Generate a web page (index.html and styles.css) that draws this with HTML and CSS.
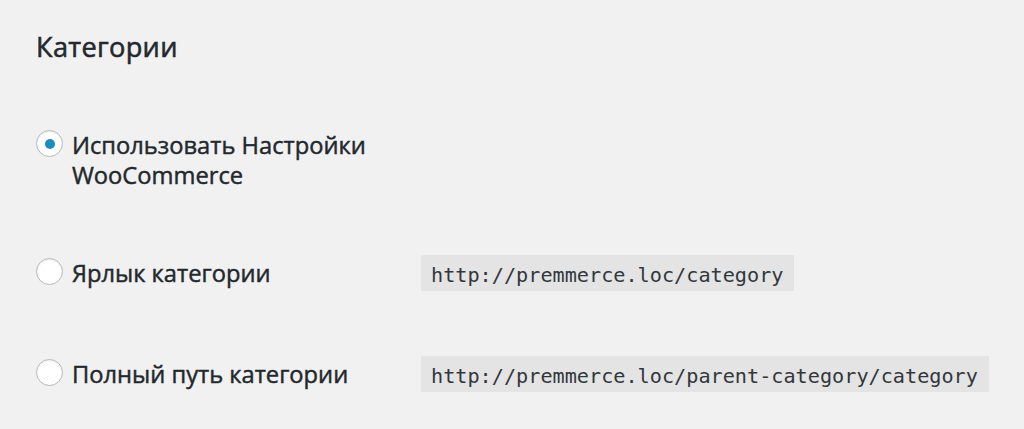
FILE: index.html
```html
<!DOCTYPE html>
<html lang="ru">
<head>
<meta charset="utf-8">
<title>Категории</title>
<link rel="stylesheet" href="styles.css">
</head>
<body>
<main class="page">
  <h2 class="title">Категории</h2>
  <div class="options">
    <div class="row">
      <label class="choice"><input type="radio" name="cat" class="radio" checked><span class="text">Использовать Настройки WooCommerce</span></label>
      <div class="value"></div>
    </div>
    <div class="row row-center">
      <label class="choice"><input type="radio" name="cat" class="radio"><span class="text">Ярлык категории</span></label>
      <div class="value"><code class="code">http://premmerce.loc/category</code></div>
    </div>
    <div class="row row-center">
      <label class="choice"><input type="radio" name="cat" class="radio"><span class="text">Полный путь категории</span></label>
      <div class="value"><code class="code">http://premmerce.loc/parent-category/category</code></div>
    </div>
  </div>
</main>
</body>
</html>
```

FILE: styles.css
```css
html, body {
  margin: 0;
  padding: 0;
  background: #f1f1f1;
}

body {
  font-family: "Open Sans", "Noto Sans", sans-serif;
  color: #23282d;
}

.page {
  padding: 32px 0 0 36px;
  display: flex;
  flex-direction: column;
  gap: 68px;
}

.title {
  margin: 0;
  font-size: 27.2px;
  line-height: 30px;
  font-weight: 400;
  -webkit-text-stroke: 0.55px #23282d;
  letter-spacing: 0.3px;
}

.options {
  display: flex;
  flex-direction: column;
  gap: 65px;
}

.row {
  display: grid;
  grid-template-columns: 385px auto;
  align-items: start;
}

.row-center {
  align-items: center;
}

.choice {
  display: flex;
  align-items: flex-start;
  gap: 9px;
  font-size: 23.7px;
  font-weight: 400;
  line-height: 30px;
  padding-right: 30px;
  -webkit-text-stroke: 0.45px #23282d;
}

.radio {
  appearance: none;
  -webkit-appearance: none;
  margin: 0;
  flex: none;
  width: 27px;
  height: 27px;
  border-radius: 50%;
  border: 1px solid #b4b9be;
  background: #fff;
  box-shadow: inset 0 1px 2px rgba(0, 0, 0, 0.08);
  display: grid;
  place-items: center;
  box-sizing: border-box;
}

.radio:checked::before {
  content: "";
  width: 10px;
  height: 10px;
  border-radius: 50%;
  background: #1e8cbe;
}

.code {
  display: inline-block;
  font-family: "DejaVu Sans Mono", "Liberation Mono", monospace;
  font-size: 20.2px;
  line-height: 32px;
  padding: 4px 11px 0 10px;
  background: #e4e4e4;
  color: #32373c;
}
```
